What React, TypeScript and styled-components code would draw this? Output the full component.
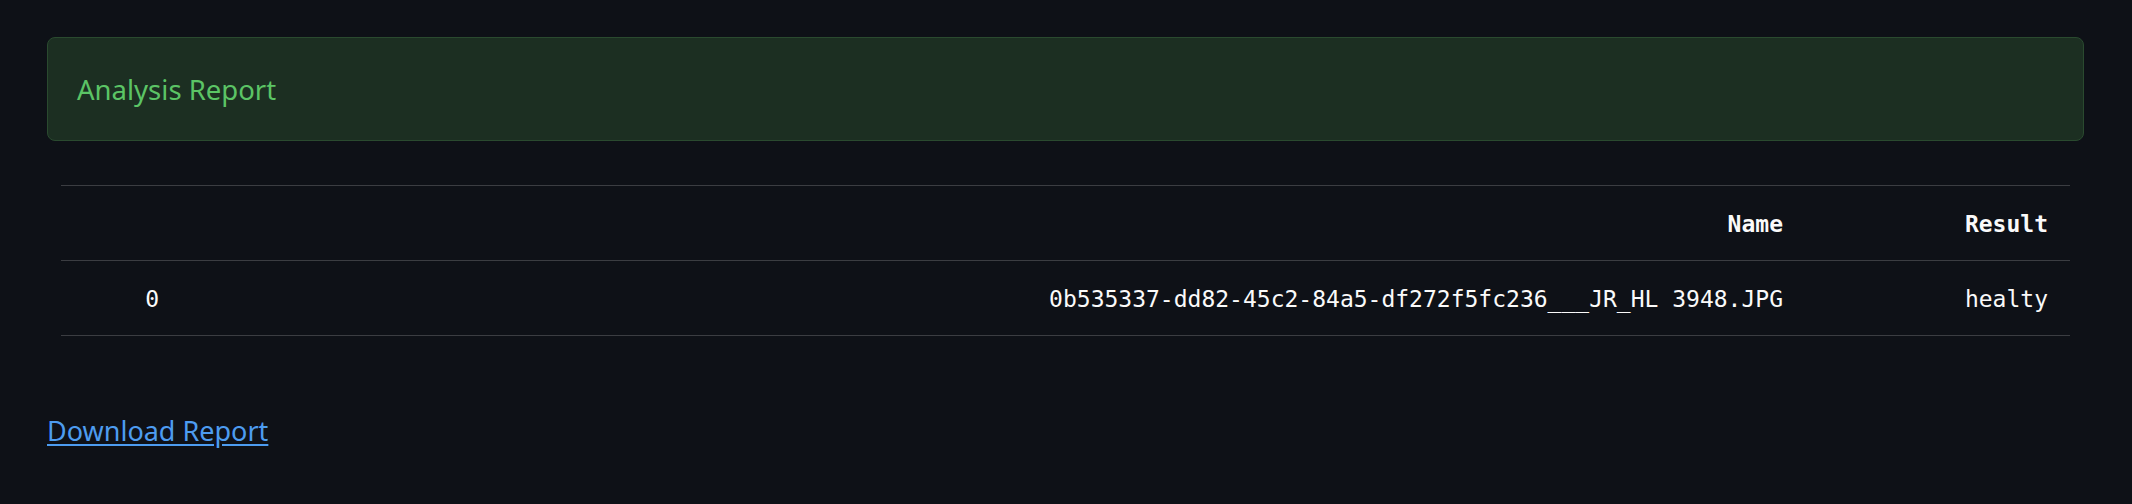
import React from "react";
import styled, { createGlobalStyle } from "styled-components";

const Global = createGlobalStyle`
  html, body {
    margin: 0;
    padding: 0;
    background: #0e1117;
  }
  body {
    font-family: "Noto Sans", "Open Sans", sans-serif;
    color: #fafafa;
  }
`;

const Page = styled.main`
  box-sizing: border-box;
  width: 2132px;
  min-height: 504px;
  padding: 37px 48px 0 47px;
  display: flex;
  flex-direction: column;
`;

const Alert = styled.div`
  box-sizing: border-box;
  height: 104px;
  display: flex;
  align-items: center;
  padding: 0 29px;
  background: #1c2f22;
  border: 1px solid #2a4a2f;
  border-radius: 8px;
  color: #5bc465;
  font-size: 27.5px;
`;

const Table = styled.div`
  margin: 44px 14px 0 14px;
  display: grid;
  grid-template-columns: 120px 1fr 265px;
  font-family: "DejaVu Sans Mono", "Liberation Mono", monospace;
  font-size: 23px;
  color: #fafafa;
  border-bottom: 1px solid #3b3d42;
`;

const Cell = styled.div<{ $head?: boolean }>`
  box-sizing: border-box;
  height: 75px;
  display: flex;
  align-items: center;
  justify-content: flex-end;
  padding: 1px 22px 0;
  border-top: 1px solid #3b3d42;
  font-weight: ${(p) => (p.$head ? 600 : 400)};
  white-space: nowrap;
`;

const LinkRow = styled.div`
  margin-top: 76px;
`;

const DownloadLink = styled.a`
  color: #4d9cf0;
  font-size: 27px;
  text-decoration: underline;
  text-underline-offset: 3px;
`;

export default function App() {
  return (
    <>
      <Global />
      <Page>
        <Alert>Analysis Report</Alert>
        <Table>
          <Cell $head />
          <Cell $head>Name</Cell>
          <Cell $head>Result</Cell>
          <Cell>0</Cell>
          <Cell>0b535337-dd82-45c2-84a5-df272f5fc236___JR_HL 3948.JPG</Cell>
          <Cell>healty</Cell>
        </Table>
        <LinkRow>
          <DownloadLink href="#">Download Report</DownloadLink>
        </LinkRow>
      </Page>
    </>
  );
}
